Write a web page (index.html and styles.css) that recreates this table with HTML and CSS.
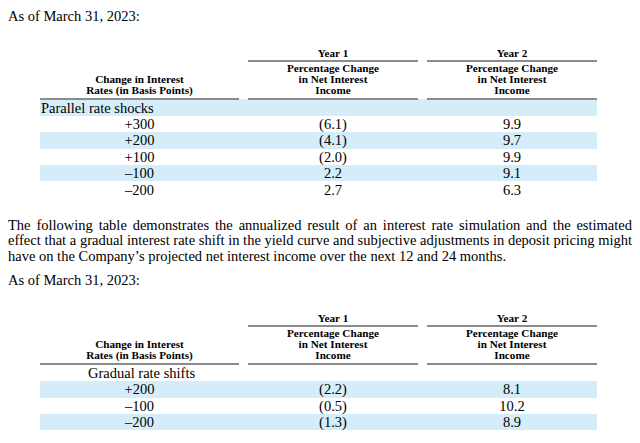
FILE: index.html
```html
<!DOCTYPE html>
<html>
<head>
<meta charset="utf-8">
<link rel="stylesheet" href="styles.css">
</head>
<body>
<p class="asof first">As of March 31, 2023:</p>
<table class="rt t1">
  <colgroup>
    <col class="c1"><col class="sp"><col class="c2"><col class="sp"><col class="c3">
  </colgroup>
  <thead>
    <tr class="yr">
      <th></th><th class="sp"></th><th class="ul">Year 1</th><th class="sp"></th><th class="ul">Year 2</th>
    </tr>
    <tr class="hd">
      <th class="ul">Change in Interest<br>Rates (in Basis Points)</th><th class="sp"></th>
      <th class="ul">Percentage Change<br>in Net Interest<br>Income</th><th class="sp"></th>
      <th class="ul">Percentage Change<br>in Net Interest<br>Income</th>
    </tr>
  </thead>
  <tbody>
    <tr class="band"><td class="label" colspan="5">Parallel rate shocks</td></tr>
    <tr><td>+300</td><td></td><td>(6.1)</td><td></td><td>9.9</td></tr>
    <tr class="band"><td>+200</td><td></td><td>(4.1)</td><td></td><td>9.7</td></tr>
    <tr><td>+100</td><td></td><td>(2.0)</td><td></td><td>9.9</td></tr>
    <tr class="band"><td>–100</td><td></td><td>2.2</td><td></td><td>9.1</td></tr>
    <tr><td>–200</td><td></td><td>2.7</td><td></td><td>6.3</td></tr>
  </tbody>
</table>
<p class="para">The following table demonstrates the annualized result of an interest rate simulation and the estimated effect that a gradual interest rate shift in the yield curve and subjective adjustments in deposit pricing might have on the Company’s projected net interest income over the next 12 and 24 months.</p>
<p class="asof second">As of March 31, 2023:</p>
<table class="rt t2">
  <colgroup>
    <col class="c1"><col class="sp"><col class="c2"><col class="sp"><col class="c3">
  </colgroup>
  <thead>
    <tr class="yr">
      <th></th><th class="sp"></th><th class="ul">Year 1</th><th class="sp"></th><th class="ul">Year 2</th>
    </tr>
    <tr class="hd">
      <th class="ul">Change in Interest<br>Rates (in Basis Points)</th><th class="sp"></th>
      <th class="ul">Percentage Change<br>in Net Interest<br>Income</th><th class="sp"></th>
      <th class="ul">Percentage Change<br>in Net Interest<br>Income</th>
    </tr>
  </thead>
  <tbody>
    <tr><td class="label indent" colspan="5">Gradual rate shifts</td></tr>
    <tr class="band"><td>+200</td><td></td><td>(2.2)</td><td></td><td>8.1</td></tr>
    <tr><td>–100</td><td></td><td>(0.5)</td><td></td><td>10.2</td></tr>
    <tr class="band"><td>–200</td><td></td><td>(1.3)</td><td></td><td>8.9</td></tr>
  </tbody>
</table>
</body>
</html>
```
FILE: styles.css
```css
html, body {
  background: #ffffff;
}
body {
  margin: 8px;
  font-family: "Liberation Serif", "Times New Roman", serif;
  font-size: 14.5px;
  color: #000;
}
.asof {
  margin: 0;
  line-height: 16px;
}
.asof.second {
  margin-top: 8px;
}
.rt {
  border-collapse: collapse;
  border-spacing: 0;
  margin-left: 32px;
  table-layout: fixed;
  width: 557px;
}
.rt.t1 {
  margin-top: 23px;
}
.rt.t2 {
  margin-top: 24px;
}
.c1 { width: 199px; }
.sp { width: 9px; }
.c2, .c3 { width: 170px; }
.rt th {
  font-size: 11.2px;
  font-weight: bold;
  text-align: center;
  vertical-align: bottom;
  padding: 0;
}
.rt .yr th {
  line-height: 12px;
  padding-bottom: 1px;
}
.rt .hd th {
  line-height: 11px;
  padding-top: 1px;
  padding-bottom: 1.5px;
}
.rt th.ul {
  border-bottom: 2px solid #8c8c8c;
}
.rt td {
  padding: 0;
  height: 16.4px;
  line-height: 16px;
  text-align: center;
  font-size: 14.5px;
}
.rt td.label {
  text-align: left;
  padding-left: 1px;
}
.rt td.label.indent {
  padding-left: 48px;
}
.band td {
  background: #d5edf8;
}
.para {
  margin: 20px 0 0 0;
  line-height: 15.5px;
  text-align: justify;
}
```
